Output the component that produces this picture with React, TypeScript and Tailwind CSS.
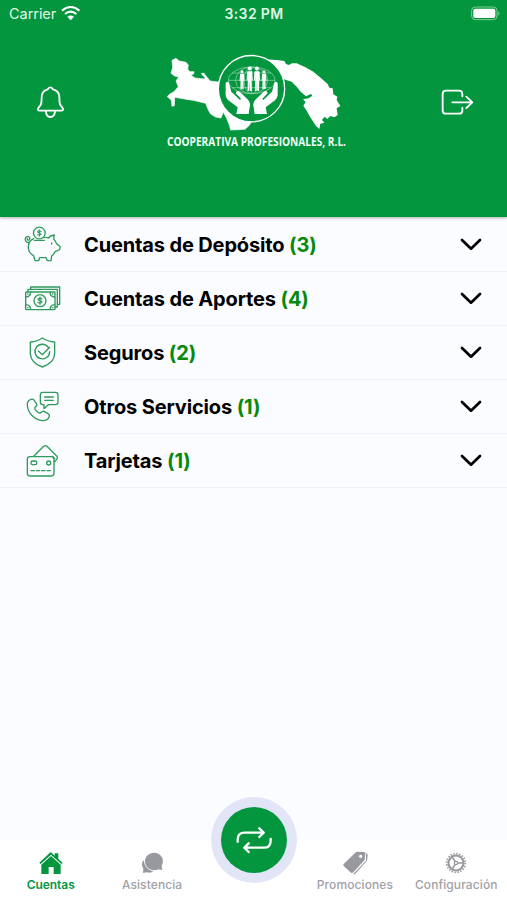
import type { ReactNode } from "react";

function StatusBar() {
  return (
    <div className="flex h-7 items-center text-[14.5px] text-[#e2f6e7]">
      <div className="flex flex-1 items-center gap-[5px] pl-[9px]">
        <span className="tracking-[-0.05px]">Carrier</span>
        <svg className="-mt-0.5 h-[15px] w-[19px]" viewBox="184 17 57 45" fill="none" stroke="#fff" strokeWidth="6.5">
          <path d="M187 31 Q213 9 239 31" />
          <path d="M196 41 Q213 27 230 41" />
          <path d="M203 49 Q213 42 223 49 L213 60Z" fill="#fff" stroke="none" />
        </svg>
      </div>
      <span className="-mt-px mr-[2px] text-[14px] font-semibold tracking-[0.35px]">3:32 PM</span>
      <div className="flex flex-1 justify-end pr-[6px]">
        <svg className="-mt-0.5 h-[15px] w-[30px]" viewBox="212 17 90 45">
          <rect x="214" y="20" width="76" height="38" rx="11" fill="none" stroke="#83cc96" strokeWidth="3" />
          <rect x="219" y="25" width="66" height="28" rx="6" fill="#fff" />
          <path d="M294 33 Q301 39 294 46Z" fill="#83cc96" />
        </svg>
      </div>
    </div>
  );
}

function Person({ x, y, h }: { x: number; y: number; h: number }) {
  return (
    <g transform={`translate(${x} ${y}) scale(${h / 70})`} fill="#fff">
      <circle cx="0" cy="6" r="5.5" />
      <path d="M-7 14H7L9 40H6L5 27 6 70H1L0 44-1 70H-6L-5 27-6 40H-9Z" />
    </g>
  );
}

function Logo() {
  return (
    <svg className="h-[110px] w-[190px] overflow-visible" viewBox="0 0 570 330">
      <path
        fill="#fff"
        stroke="#fff"
        strokeWidth="2"
        strokeLinejoin="round"
        d="M36 46 48 40 58 48 78 52 85 60 83 73 90 80 102 80 101 87 92 90 105 99 132 102 135 98 124 86 131 84 150 108 200 114 275 229 268 241 255 253 212 255 208 240 200 220 190 201 183 219 167 216 152 207 145 195 137 175 118 170 100 166 85 164 70 161 44 157 43 182 36 184 34 166 22 155 28 148 42 140 55 125 48 108 56 96 44 93 33 85 38 68Z"
      />
      <path
        fill="#fff"
        d="M312 43 350 45 373 48 378 57 386 60 396 55 410 55 435 66 460 80 480 97 503 117 508 128 518 130 520 148 532 155 530 165 541 183 530 190 533 210 523 217 511 213 502 222 494 215 486 225 493 233 481 236 478 252 468 243 450 215 440 197 430 182 437 171 429 163 446 160 457 152 453 147 438 154 422 140 410 125 395 110 378 105 338 90Z"
      />
      <circle cx="274.5" cy="131" r="99.5" fill="#03963f" stroke="#fff" strokeWidth="4" />
      <g fill="none" stroke="#fff" strokeWidth="2" opacity=".6">
        <ellipse cx="275" cy="106" rx="70" ry="40" />
        <ellipse cx="275" cy="106" rx="48" ry="40" />
        <ellipse cx="275" cy="106" rx="23" ry="40" />
        <path d="M205 106H345M216 84H334M216 128H334M275 66V146" />
      </g>
      <Person x={246} y={75} h={58} />
      <Person x={269} y={64} h={74} />
      <Person x={291} y={64} h={74} />
      <Person x={312} y={75} h={58} />
      <g fill="#fff">
        <path d="M197 115Q201 106 207 114L214 140 240 165 243 161 227 145Q229 134 240 141L264 164Q273 174 269 187L266 207H229L233 187 205 166Q198 160 197 151Z" />
        <path d="M353 115Q349 106 343 114L336 140 310 165 307 161 323 145Q321 134 310 141L286 164Q277 174 281 187L284 207H321L317 187 345 166Q352 160 353 151Z" />
      </g>
      <text
        x="21"
        y="304"
        textLength="537"
        lengthAdjust="spacingAndGlyphs"
        fill="#f1fff4"
        className="font-['Open_Sans',sans-serif] text-[35px] font-bold"
      >
        COOPERATIVA PROFESIONALES, R.L.
      </text>
    </svg>
  );
}

function Dollar({ x, y, s }: { x: number; y: number; s: number }) {
  return (
    <path
      transform={`translate(${x} ${y}) scale(${s})`}
      strokeWidth="3.6"
      d="M6-5C4-8-5-9-6-4C-6 1 6-1 6 4C5 9-4 8-6 5M0-11V11"
    />
  );
}

const accounts: { label: string; count: number; box: string; icon: ReactNode }[] = [
  {
    label: "Cuentas de Depósito",
    count: 3,
    box: "60 36 135 162",
    icon: (
      <>
        <circle cx="118" cy="84" r="17.5" />
        <Dollar x={118} y={84} s={0.9} />
        <path d="M101 101C90 106 85 116 85 126C85 139 91 147 101 152L105 167H116L119 158H138L142 167H153L155 153C160 150 163 145 165 140L177 135C180 134 180 132 180 129V124C174 121 169 117 168 113C167 109 163 105 161 102L163 90C155 91 149 94 145 99C140 97 135 97 131 98" />
        <path d="M103 106H133M87 113C77 112 73 105 77 98C81 92 91 95 89 102C88 108 80 105 82 101M155 114V117" />
      </>
    ),
  },
  {
    label: "Cuentas de Aportes",
    count: 4,
    box: "60 198 135 162",
    icon: (
      <>
        <rect x="77" y="261" width="88" height="53" rx="2" />
        <path d="M84 260V253H172V306H166M92 252V246H179V298H173" />
        <circle cx="120" cy="287" r="18" />
        <Dollar x={120} y={287} s={1} />
        <path d="M78 276Q91 275 92 262M164 276Q151 275 150 262M78 299Q91 300 92 313M164 299Q151 300 150 313" />
        <path d="M83 267H84M158 267H159M83 308H84M158 308H159" strokeWidth="4" />
      </>
    ),
  },
  {
    label: "Seguros",
    count: 2,
    box: "60 0 135 162",
    icon: (
      <>
        <path d="M127 39C116 47 105 50 91 51V86C92 105 105 118 127 126C149 118 163 105 164 86V51C150 50 139 47 127 39Z" />
        <path d="M145 67A22 22 0 1 0 149 80M115 78 127 89 149 67" />
      </>
    ),
  },
  {
    label: "Otros Servicios",
    count: 1,
    box: "60 162 135 162",
    icon: (
      <>
        <path d="M93 223C87 225 81 231 82 240C83 265 106 288 132 287C140 286 146 280 148 274C149 270 147 268 144 266L132 259C129 257 127 259 124 262C121 265 118 265 114 262C108 257 103 250 105 247L110 242C112 240 111 238 109 235L101 224C99 222 96 222 93 223Z" />
        <path d="M128 202H166Q174 202 174 210V231Q174 239 166 239H145L132 251V239H128Q121 239 121 231V210Q121 202 128 202ZM134 216H160M134 226H160" />
      </>
    ),
  },
  {
    label: "Tarjetas",
    count: 1,
    box: "60 324 135 162",
    icon: (
      <>
        <rect x="82" y="395" width="80" height="58" rx="8" />
        <path d="M101 394 131 364Q136 360 141 364L170 393Q175 399 170 403L163 411" />
        <path d="M157 394 164 401" />
        <rect x="93" y="408" width="17" height="11" rx="4" />
        <circle cx="146" cy="414" r="6" />
        <path d="M93 437H103M109 437H119M125 437H135M141 437H151" />
      </>
    ),
  },
];

function AccountRow({ label, count, box, icon }: (typeof accounts)[number]) {
  return (
    <div className="flex h-[54px] items-center border-b border-[#f0f1f5]">
      <svg
        className="-mt-0.5 ml-5 h-[54px] w-[45px] shrink-0"
        viewBox={box}
        fill="none"
        stroke="#2f9a5b"
        strokeWidth="4"
        strokeLinecap="round"
        strokeLinejoin="round"
      >
        {icon}
      </svg>
      <span className="ml-[19px] flex-1 text-[20px] leading-6 font-bold tracking-[-0.14px] text-black">
        {label} <span className="text-[#078a0b]">({count})</span>
      </span>
      <svg
        className="mr-[25px] h-4 w-[22px]"
        viewBox="0 0 22 16"
        fill="none"
        stroke="#000"
        strokeWidth="2.7"
        strokeLinecap="round"
        strokeLinejoin="round"
      >
        <path d="M2 3 11 11.7 20 3" />
      </svg>
    </div>
  );
}

function Tab({ label, active, box, children }: { label: string; active?: boolean; box: string; children: ReactNode }) {
  return (
    <div className={`flex w-1/5 flex-col items-center pt-2 ${active ? "text-[#03963f]" : "text-[#a1a1a7]"}`}>
      <svg className="h-7 w-[30px] shrink-0" viewBox={box} fill={active ? "#03963f" : "#98989f"}>
        {children}
      </svg>
      <span
        className={`text-[12px] leading-[18px] whitespace-nowrap ${active ? "font-semibold tracking-[-0.05px]" : "font-medium tracking-[0.1px]"}`}
      >
        {label}
      </span>
    </div>
  );
}

export default function App() {
  return (
    <div className="flex h-[900px] w-[507px] flex-col overflow-hidden bg-[#fbfcff] font-['Inter',sans-serif]">
      <header className="z-10 h-[217px] shrink-0 bg-[#03963f] shadow-[0_1px_3px_rgba(0,0,0,0.3)]">
        <StatusBar />
        <div className="flex items-start justify-between pt-[17px]">
          <svg
            className="mt-[39px] ml-[35px] h-9 w-[30px]"
            viewBox="105 252 90 108"
            fill="none"
            stroke="#fff"
            strokeWidth="5.5"
            strokeLinecap="round"
            strokeLinejoin="round"
          >
            <path d="M151 262C147 262 145 264 143 268C130 271 125 280 125 292C125 313 123 315 115 324C112 328 114 332 119 332H184C189 332 191 328 188 324C180 315 178 313 178 292C178 280 172 271 159 268C157 264 155 262 151 262ZM138 334Q138 351 151 351T165 334" />
          </svg>
          <div className="ml-[95px] flex-1">
            <Logo />
          </div>
          <svg
            className="mt-[39px] mr-[31px] h-9 w-9"
            viewBox="120 252 108 108"
            fill="none"
            stroke="#fff"
            strokeWidth="5.5"
            strokeLinecap="round"
            strokeLinejoin="round"
          >
            <path d="M187 289V282Q187 272 177 272H138Q128 272 128 282V332Q128 341 138 341H177Q187 341 187 332V323M157 307H216M199 290 217 307 199 324" />
          </svg>
        </div>
      </header>

      <main className="flex-1 pt-px">
        {accounts.map((account) => (
          <AccountRow key={account.label} {...account} />
        ))}
      </main>

      <nav className="relative flex h-[60px] shrink-0 bg-white">
        <Tab label="Cuentas" active box="108 204 90 84">
          <path d="M118 248 152 216 164 227V220H175V237L188 248 184 252 153 224 122 252Z" />
          <path d="M124 254 153 228 182 254V282H161V261H146V282H124Z" />
        </Tab>
        <Tab label="Asistencia" box="411 204 90 84">
          <path d="M431 241C424 247 425 258 430 265L429 279 440 277C447 280 456 278 460 274C444 271 434 260 431 241Z" />
          <path d="M463 218C447 218 435 229 435 244C435 259 447 271 463 271C468 271 472 270 476 268L487 270 485 257C496 238 482 218 463 218Z" />
        </Tab>
        <div className="w-1/5" />
        <Tab label="Promociones" box="99 204 90 84">
          <path
            fillRule="evenodd"
            d="M148 215 172 216Q175 217 175 220L173 240 139 277Q136 281 132 278L110 258Q107 255 110 252ZM161 224A5 5 0 1 0 161 234A5 5 0 1 0 161 224Z"
          />
          <path d="M177 219Q182 221 182 226L180 242 147 279Q143 284 138 283L177 242Z" />
        </Tab>
        <Tab label="Configuración" box="404 204 90 84">
          <g fill="none" stroke="#98989f">
            <circle cx="449" cy="249" r="28" strokeWidth="5" strokeDasharray="4.4 4.396" />
            <circle cx="449" cy="249" r="22.5" strokeWidth="6" />
            <circle cx="449" cy="249" r="5" strokeWidth="4" />
            <path d="M454 249H471M446 244 437 230M446 254 437 268" strokeWidth="5" />
          </g>
        </Tab>
        <button
          aria-label="Transferir"
          className="absolute -top-[43px] left-[211px] flex h-[86px] w-[86px] items-center justify-center rounded-full bg-[#e1e5f5]"
        >
          <span className="flex h-[66px] w-[66px] items-center justify-center rounded-full bg-[#03963f]">
            <svg
              className="h-[30px] w-[38px]"
              viewBox="136 137 114 90"
              fill="none"
              stroke="#fff"
              strokeWidth="7"
              strokeLinecap="round"
              strokeLinejoin="round"
            >
              <path d="M144 187V181Q144 160 165 160H221M209 147 222 160 209 173M243 179V184Q243 205 222 205H166M177 192 164 205 177 218" />
            </svg>
          </span>
        </button>
      </nav>
    </div>
  );
}
